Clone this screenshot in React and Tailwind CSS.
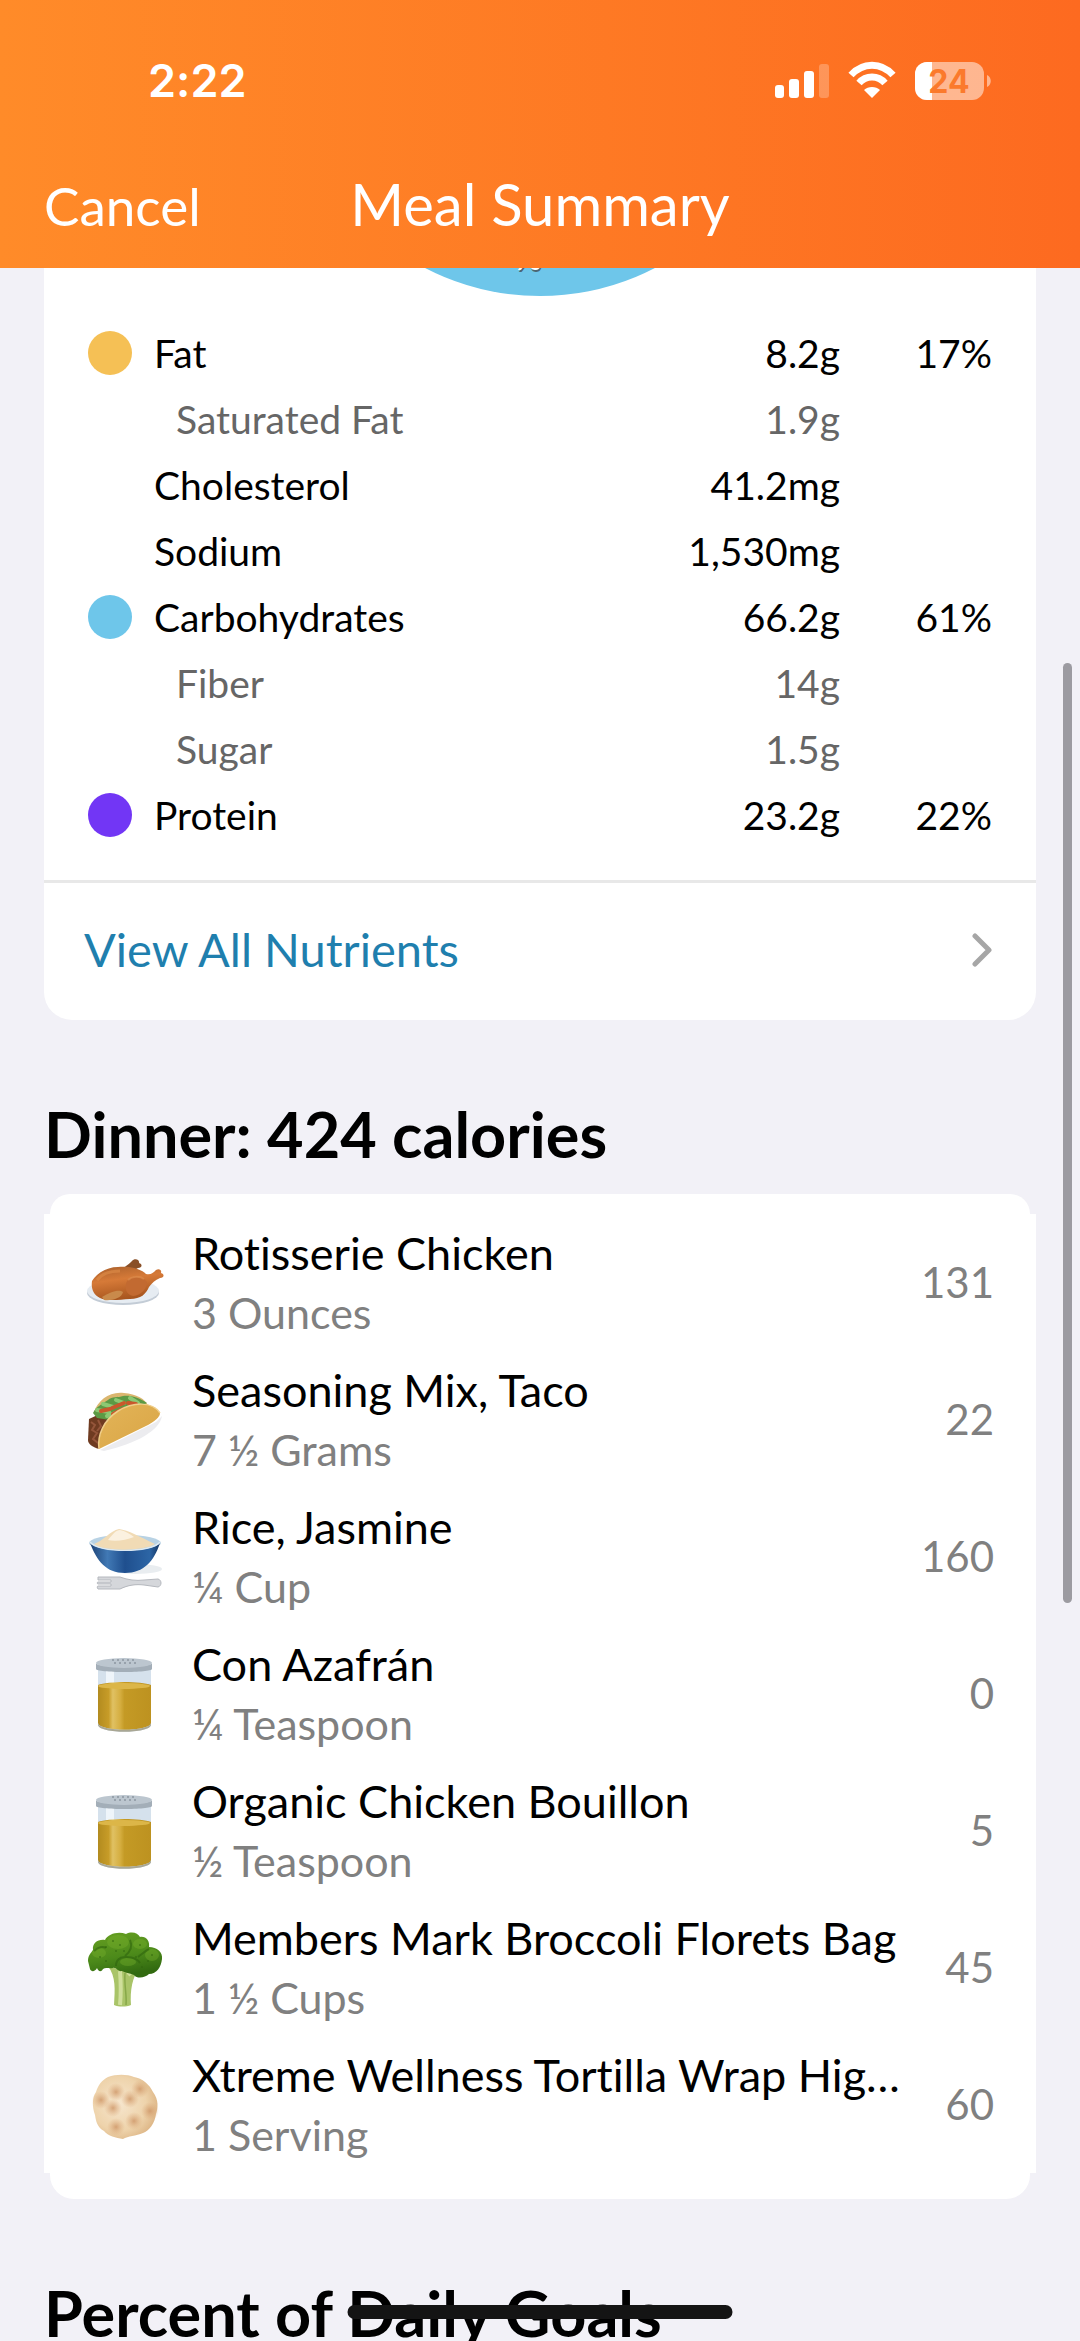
import { useId } from "react";

const nutrients = [
    { name: "Fat", amount: "8.2g", percent: "17%", dot: "bg-[#f5c055]" },
    { name: "Saturated Fat", amount: "1.9g", sub: true },
    { name: "Cholesterol", amount: "41.2mg" },
    { name: "Sodium", amount: "1,530mg" },
    { name: "Carbohydrates", amount: "66.2g", percent: "61%", dot: "bg-[#6ec6ea]" },
    { name: "Fiber", amount: "14g", sub: true },
    { name: "Sugar", amount: "1.5g", sub: true },
    { name: "Protein", amount: "23.2g", percent: "22%", dot: "bg-[#7236f5]" },
];

const foods = [
    { name: "Rotisserie Chicken", serving: "3 Ounces", calories: 131, Icon: ChickenIcon },
    { name: "Seasoning Mix, Taco", serving: "7 ½ Grams", calories: 22, Icon: TacoIcon },
    { name: "Rice, Jasmine", serving: "¼ Cup", calories: 160, Icon: RiceIcon },
    { name: "Con Azafrán", serving: "¼ Teaspoon", calories: 0, Icon: JarIcon },
    { name: "Organic Chicken Bouillon", serving: "½ Teaspoon", calories: 5, Icon: JarIcon },
    { name: "Members Mark Broccoli Florets Bag", serving: "1 ½ Cups", calories: 45, Icon: BroccoliIcon },
    { name: "Xtreme Wellness Tortilla Wrap Hig…", serving: "1 Serving", calories: 60, Icon: TortillaIcon },
];

function ChickenIcon() {
    const id = useId();
    return (
        <svg viewBox="0 3 110 100" className="h-[100px] w-[110px]">
            <defs>
                <linearGradient id={id} x1="0" y1="0" x2="0.3" y2="1">
                    <stop offset="0" stopColor="#a9602c" />
                    <stop offset="0.45" stopColor="#d67a38" />
                    <stop offset="1" stopColor="#a8561f" />
                </linearGradient>
            </defs>
            <ellipse cx="53" cy="63" rx="36" ry="12" fill="#c3ccd6" />
            <ellipse cx="53" cy="61" rx="36" ry="12" fill="#e6ecf2" />
            <path d="M46 40 C53 39 58 35 62 31 C64 28 70 29 69 33 C73 34 72 38 68 38 C64 40 61 42 58 44 Z" fill="#8a5028" />
            <path d="M22 51 C26 44 36 37 48 37 C58 36 70 38 76 44 C81 45 83 43 86 40 C89 38 92 40 91 43 C95 44 94 48 90 48 C85 50 82 53 79 57 C76 64 71 69 60 69 C48 70 36 71 30 68 C23 65 21 58 22 51 Z" fill={`url(#${id})`} />
            <path d="M57 51 C62 45 73 46 77 52 C77 59 71 65 63 66 C56 65 54 57 57 51 Z" fill="#c26a31" />
            <path d="M58 50 C62 46 70 46 74 49" stroke="#dc8b4d" strokeWidth="2" fill="none" opacity="0.7" />
            <path d="M32 67 C40 62 49 59 53 62 C52 68 42 71 34 70 Z" fill="#c98a4b" />
            <path d="M27 50 C33 42 42 41 50 41" stroke="#df8d4a" strokeWidth="3" fill="none" opacity="0.6" />
        </svg>
    );
}

function TacoIcon() {
    const id = useId();
    return (
        <svg viewBox="0 0 110 100" className="h-[100px] w-[110px]">
            <defs>
                <linearGradient id={id} x1="0" y1="0" x2="1" y2="1">
                    <stop offset="0" stopColor="#e3b458" />
                    <stop offset="1" stopColor="#d9a545" />
                </linearGradient>
            </defs>
            <path d="M30 80 L86 52 L92 46 C90 60 66 74 34 81 Z" fill="#ececef" />
            <path d="M24 42 C28 30 40 21 54 23 C66 24 76 29 78 36 L40 50 Z" fill="#dbb66f" />
            <path d="M19 49 L34 42 L44 50 L29 79 C22 77 18 74 18 70 Z" fill="#6f3b21" />
            <path d="M21 52 l4 3 l-3 5 l5 3 l-4 6 l5 4 M28 50 l3 6 l-4 5" stroke="#94553a" strokeWidth="2" fill="none" />
            <path d="M23 43 C26 37 33 33 38 30 C42 26 48 28 53 26 C60 25 68 27 77 33 L58 42 L40 50 L27 48 Z" fill="#5c9a45" />
            <path d="M27 40 l12 2 M33 34 l10 3 M46 30 l8 3 M60 28 l8 5 M37 46 l9 -3" stroke="#8cc973" strokeWidth="4" strokeLinecap="round" />
            <path d="M31 41 l9 -2 M42 38 l12 -5 M58 33 l8 1 M43 44 l10 -5" stroke="#c9582c" strokeWidth="4" strokeLinecap="round" />
            <path d="M29 79 C27 65 34 50 48 41 C63 32 82 31 90 43 C90 47 85 51 78 55 Z" fill={`url(#${id})`} />
            <path d="M29 79 C27 65 34 50 48 41 C63 32 82 31 90 43" stroke="#f0cf8b" strokeWidth="1.5" fill="none" />
        </svg>
    );
}

function RiceIcon() {
    const id = useId();
    return (
        <svg viewBox="0 0 110 100" className="h-[100px] w-[110px]">
            <defs>
                <linearGradient id={id}>
                    <stop offset="0" stopColor="#1d4275" />
                    <stop offset="0.25" stopColor="#4179b5" />
                    <stop offset="0.5" stopColor="#1f4f8e" />
                    <stop offset="0.85" stopColor="#2c65a5" />
                    <stop offset="1" stopColor="#163763" />
                </linearGradient>
            </defs>
            <ellipse cx="66" cy="62" rx="26" ry="5" fill="#e9edf0" />
            <ellipse cx="55" cy="36" rx="36" ry="8" fill="#b8d2e4" />
            <path d="M20 36 C27 54 36 66 55 66 C74 66 84 54 90 36 C82 46 28 46 20 36 Z" fill={`url(#${id})`} />
            <path d="M20 35 C28 46 82 46 90 35" stroke="#dce9f2" strokeWidth="1.5" fill="none" />
            <path d="M24 37 C33 34 40 24 49 22 C58 23 70 30 85 37 C76 44 34 45 24 37 Z" fill="#f1dbb5" />
            <path d="M38 33 C43 27 46 23 50 23 C55 24 60 27 64 30 C56 33 46 35 38 33 Z" fill="#fbf1e0" />
            <path d="M28 70 H50 C58 73 66 74 74 73 L88 72 C92 73 92 79 88 80 L74 78 C66 77 58 78 50 82 H28 C27 81 27 79 28 79 H41 V77 H28 C27 77 27 75 28 75 H41 V73 H28 Z" fill="#d5d7db" stroke="#b5b8be" strokeWidth="1" />
        </svg>
    );
}

function JarIcon() {
    const id = useId();
    return (
        <svg viewBox="0 0 110 110" className="h-[110px] w-[110px]">
            <defs>
                <linearGradient id={id}>
                    <stop offset="0" stopColor="#b28b1f" />
                    <stop offset="0.2" stopColor="#c79c28" />
                    <stop offset="0.28" stopColor="#e0c163" />
                    <stop offset="0.42" stopColor="#d5ae40" />
                    <stop offset="0.5" stopColor="#c49a25" />
                    <stop offset="1" stopColor="#bd9220" />
                </linearGradient>
            </defs>
            <path d="M28 28 H81 V86 C80 95 29 95 28 86 Z" fill="#d5e1ec" />
            <path d="M36 32 H44 V46 H36 Z" fill="#eff5fa" />
            <path d="M28 46 C38 42 71 42 81 46 V84 C80 93 29 93 28 84 Z" fill={`url(#${id})`} />
            <ellipse cx="54" cy="47" rx="26" ry="3" fill="#dcb648" />
            <path d="M28 84 C29 93 80 93 81 84 V86 C80 95 29 95 28 86 Z" fill="#a9a794" />
            <path d="M26 24 C26 29 82 29 82 24 V30 C82 34 26 34 26 30 Z" fill="#a3aeb8" />
            <ellipse cx="54" cy="24" rx="28" ry="5" fill="#bcc6cf" />
            <path d="M42 21 H67 M44 24 H66" stroke="#98a2ac" strokeWidth="2" strokeDasharray="2 3" />
        </svg>
    );
}

function BroccoliIcon() {
    const id = useId();
    return (
        <svg viewBox="0 4 110 110" className="h-[110px] w-[110px]">
            <defs>
                <linearGradient id={id} x1="0" y1="0" x2="0.3" y2="1">
                    <stop offset="0" stopColor="#68a022" />
                    <stop offset="0.6" stopColor="#4c8a1a" />
                    <stop offset="1" stopColor="#326a10" />
                </linearGradient>
            </defs>
            <path d="M38 57 L54 62 L70 58 C62 68 60 82 61 96 C56 98 49 98 44 96 C45 80 46 68 38 57 Z" fill="#a9c468" />
            <path d="M50 62 C51 75 51 86 50 96 M58 66 L62 62" stroke="#cfdf9b" strokeWidth="4" fill="none" />
            <path d="M55 64 C54 76 57 86 56 96" stroke="#87a848" strokeWidth="1.5" fill="none" />
            <path d="M18 52 C18 46 21 44 23 41 C22 34 28 30 35 31 C38 25 48 22 56 25 C62 22 68 24 70 28 C76 27 80 32 79 38 C87 38 93 43 92 50 C91 58 87 65 79 65 C75 69 67 70 64 66 C59 64 56 64 52 62 C48 63 46 58 43 59 C39 60 36 58 33 60 C31 64 28 62 27 59 C25 63 21 63 20 60 Z" fill={`url(#${id})`} />
            <g fill="#7cb52f" opacity="0.35">
                <ellipse cx="48" cy="33" rx="11" ry="7" />
                <ellipse cx="70" cy="35" rx="7" ry="5" />
                <ellipse cx="82" cy="46" rx="7" ry="6" />
                <ellipse cx="29" cy="44" rx="7" ry="5" />
                <ellipse cx="58" cy="53" rx="8" ry="4" />
            </g>
            <path d="M60 31 C63 38 60 43 55 47 M68 48 C72 45 75 42 79 40 M50 49 C57 47 66 48 70 54 M24 42 C28 38 33 37 36 39 M46 57 C46 52 48 50 51 49" stroke="#2f640e" strokeWidth="2" fill="none" opacity="0.6" />
            <g fill="#2f640e" opacity="0.6">
                <circle cx="36" cy="38" r="1" /><circle cx="43" cy="32" r="1" /><circle cx="50" cy="36" r="1" />
                <circle cx="46" cy="42" r="1" /><circle cx="54" cy="42" r="1" /><circle cx="30" cy="48" r="1" />
                <circle cx="36" cy="52" r="1" /><circle cx="66" cy="48" r="1" /><circle cx="72" cy="58" r="1" />
                <circle cx="82" cy="46" r="1" /><circle cx="78" cy="52" r="1" /><circle cx="70" cy="36" r="1" />
            </g>
        </svg>
    );
}

function TortillaIcon() {
    const id = useId();
    const spots = [[31, 42], [46, 34], [60, 41], [70, 31], [43, 50], [64, 63], [80, 53], [46, 69]];
    return (
        <svg viewBox="0 -8 110 110" className="h-[110px] w-[110px]">
            <defs>
                <radialGradient id={id} cx="0.4" cy="0.45" r="0.6">
                    <stop offset="0" stopColor="#f6e6ce" />
                    <stop offset="0.7" stopColor="#eed3ab" />
                    <stop offset="1" stopColor="#dfb98a" />
                </radialGradient>
                <radialGradient id={id + "spot"}>
                    <stop offset="0" stopColor="#cd9465" stopOpacity="0.8" />
                    <stop offset="1" stopColor="#dba878" stopOpacity="0" />
                </radialGradient>
            </defs>
            <path d="M38 19 C46 16 57 16 64 19 C72 20 80 27 83 34 C89 42 88 50 86 56 C85 65 79 73 73 75 C66 78 58 78 53 81 C46 80 38 78 34 73 C27 69 26 63 25 57 C22 48 22 40 26 34 C28 27 32 22 38 19 Z" fill={`url(#${id})`} />
            {spots.map(([x, y]) => (
                <circle key={x + "-" + y} cx={x} cy={y} r="9" fill={`url(#${id}spot)`} />
            ))}
        </svg>
    );
}

function StatusIcons() {
    return (
        <svg viewBox="0 0 216 40" className="h-10 w-[216px]" fill="#fff">
            <rect x="0" y="24" width="9" height="13" rx="3" />
            <rect x="14" y="18" width="10" height="19" rx="3" />
            <rect x="29" y="10" width="10" height="27" rx="3" />
            <rect x="44" y="3" width="10" height="34" rx="3" opacity="0.25" />
            <g fill="none" stroke="#fff" strokeWidth="7">
                <path d="M76 14 C88 1 106 1 118 14" />
                <path d="M84 22 C91 14 103 14 110 22" />
            </g>
            <path d="M97 37 L89 29 C93 25 101 25 105 29 Z" />
            <rect x="140" y="1" width="69" height="38" rx="12" opacity="0.5" />
            <path d="M157 1 V39 H152 A12 12 0 0 1 140 27 V13 A12 12 0 0 1 152 1 Z" />
            <path d="M212 14 C217 16 217 24 212 26 Z" opacity="0.5" />
            <text x="174" y="32" textAnchor="middle" className="font-['Inter'] text-[32px] font-bold" fill="#fb7a2c">24</text>
        </svg>
    );
}

function Header() {
    return (
        <header className="relative z-10 shrink-0 bg-linear-to-r from-[#ff8b29] to-[#fd6a20] text-white">
            <div className="flex h-[162px] items-center justify-between pr-[89px] pl-[148px]">
                <span className="font-['Inter',sans-serif] text-[45px] font-semibold">2:22</span>
                <StatusIcons />
            </div>
            <div className="grid h-[106px] grid-cols-[1fr_auto_1fr] items-start px-11">
                <button type="button" className="justify-self-start pt-4 text-left text-[53px] leading-[56px]">Cancel</button>
                <h1 className="pt-3 text-[58px] leading-[60px]">Meal Summary</h1>
            </div>
        </header>
    );
}

function NutrientTable() {
    return (
        <table className="w-full text-[39px] leading-[40px]">
            <tbody>
                {nutrients.map((n) => (
                    <tr key={n.name} className={n.sub ? "h-[66px] text-[#666]" : "h-[66px] text-black"}>
                        <td className="w-[110px] pl-11">
                            {n.dot && <span className={`block size-11 rounded-full ${n.dot}`} />}
                        </td>
                        <th scope="row" className={n.sub ? "pl-[22px] text-left font-normal" : "text-left font-normal"}>{n.name}</th>
                        <td className="text-right">{n.amount}</td>
                        <td className="w-[196px] pr-11 text-right">{n.percent}</td>
                    </tr>
                ))}
            </tbody>
        </table>
    );
}

export default function App() {
    return (
        <div className="relative flex h-screen flex-col overflow-hidden bg-[#f2f1f7] font-['Lato',sans-serif] text-black [font-variant-ligatures:none]">
            <Header />
            <main className="px-11">
                <section className="rounded-b-[28px] bg-white">
                    {/* bottom edge of the calorie chart, rest is scrolled under the header */}
                    <svg viewBox="0 0 240 52" className="mx-auto h-[52px] w-[240px]">
                        <circle cx="120" cy="-222" r="250" fill="#6ec6ea" />
                        <text x="123" y="4" textAnchor="end" className="text-[34px]" fill="#4c6673">%</text>
                        <text x="122" y="2" textAnchor="end" className="text-[34px]" fill="#fff">%</text>
                    </svg>
                    <NutrientTable />
                    <a href="#nutrients" className="mt-8 flex h-[140px] items-center justify-between border-t-3 border-[#e8e8e8] pr-11 pb-1 pl-10 text-[47px] text-[#1f7fae]">
                        View All Nutrients
                        <svg viewBox="0 0 20 36" className="h-9 w-5" fill="none" stroke="#a6a6a6" strokeWidth="5" strokeLinecap="round" strokeLinejoin="round">
                            <path d="M3 4 L17 18 L3 32" />
                        </svg>
                    </a>
                </section>

                <h2 className="mt-[82px] text-[63px] leading-[64px] font-bold">Dinner: 424 calories</h2>
                <section className="mt-7">
                    <div className="mx-[6px] h-5 rounded-t-[20px] bg-white" />
                    <ul className="bg-white">
                        {foods.map((f) => (
                            <li key={f.name} className="flex h-[137px] items-center pr-[42px] pl-[26px]">
                                <f.Icon />
                                <div className="ml-[12px] min-w-0 flex-1">
                                    <p className="truncate text-[45px] leading-[60px]">{f.name}</p>
                                    <p className="text-[43px] leading-[60px] text-[#808080]">{f.serving}</p>
                                </div>
                                <span className="ml-6 text-[42px] text-[#808080]">{f.calories}</span>
                            </li>
                        ))}
                    </ul>
                    <div className="mx-[6px] h-[26px] rounded-b-3xl bg-white" />
                </section>

                <h2 className="mt-[82px] text-[63px] leading-[64px] font-bold whitespace-nowrap">Percent of Daily Goals</h2>
            </main>

            {/* scroll indicator */}
            <div className="absolute top-[663px] right-[8px] h-[940px] w-[9px] rounded-full bg-[#9c9ba1]" />
            {/* home indicator */}
            <div className="absolute bottom-[22px] left-1/2 h-[14px] w-[385px] -translate-x-1/2 rounded-full bg-[#141414]" />
        </div>
    );
}
